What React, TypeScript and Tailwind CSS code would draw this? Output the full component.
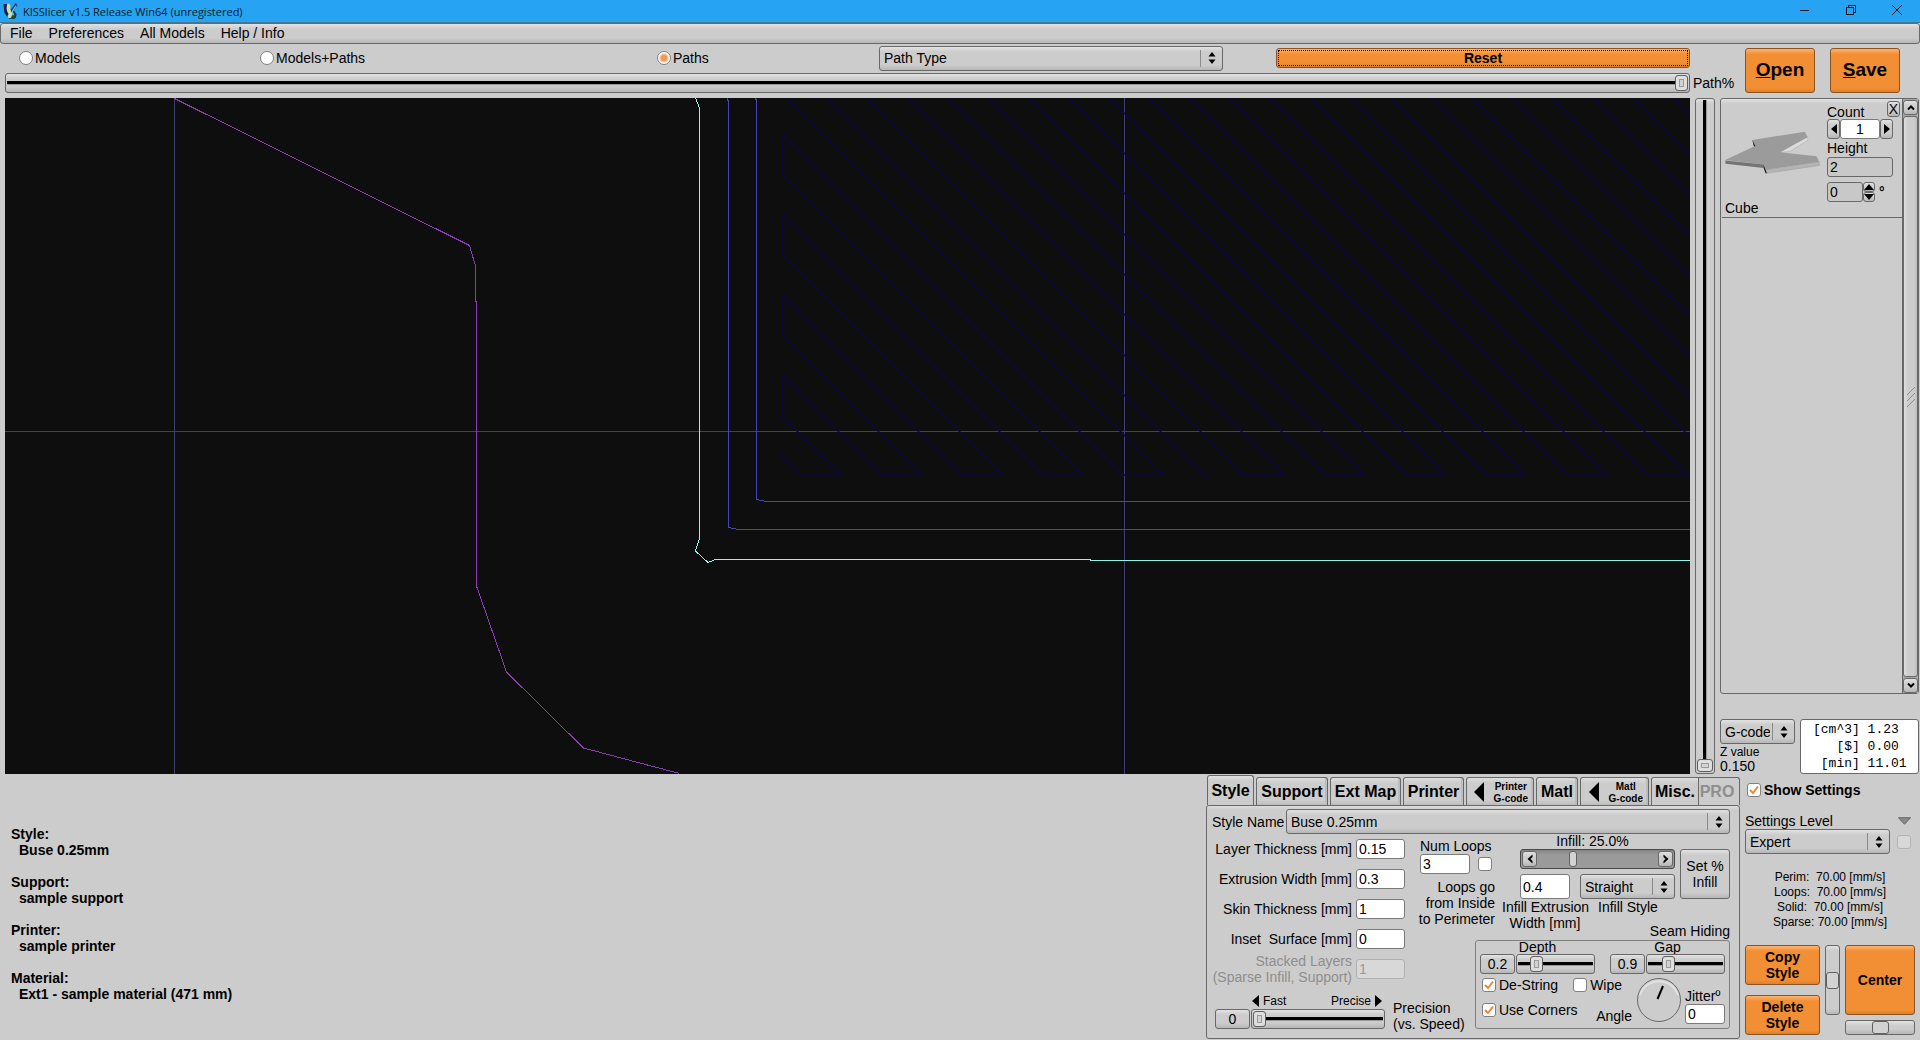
import type { ReactNode } from 'react';

const box =
  'rounded-[3px] border border-[#686868] bg-[linear-gradient(to_bottom,#e2e2e2_0,#cccccc_5px,#cccccc_calc(100%_-_5px),#b6b6b6_100%)]';

const orange =
  'rounded-[3px] border border-[#8a5420] bg-[linear-gradient(to_bottom,#fcb574_0,#f28f35_5px,#f28f35_calc(100%_-_4px),#dd7f2c_100%)] font-bold text-black';

const thumb =
  '[&::-webkit-slider-thumb]:appearance-none [&::-webkit-slider-thumb]:rounded-[3px] [&::-webkit-slider-thumb]:border [&::-webkit-slider-thumb]:border-[#606060] [&::-webkit-slider-thumb]:bg-[#d2d2d2]';

const slot =
  '[&::-webkit-slider-thumb]:shadow-[inset_0_0_0_3px_#dedede,inset_0_0_0_4px_#9a9a9a]';

const hTrack =
  '[&::-webkit-slider-runnable-track]:h-full [&::-webkit-slider-runnable-track]:bg-[linear-gradient(to_bottom,transparent_calc(50%_-_2px),#000_calc(50%_-_2px),#000_calc(50%_+_1px),#999_calc(50%_+_1px),#999_calc(50%_+_2px),transparent_calc(50%_+_2px))]';

const field = 'h-5 rounded-[3px] border border-[#7a7a7a] bg-white px-[2px] text-sm outline-none';

type SliderProps = { label: string; value: number; className?: string };

const Slider = ({ label, value, className = '' }: SliderProps) => (
  <input
    type="range"
    aria-label={label}
    defaultValue={value}
    className={`block h-5 min-w-0 appearance-none p-px ${box} ${hTrack} ${thumb} ${slot} [&::-webkit-slider-thumb]:h-4 [&::-webkit-slider-thumb]:w-[13px] ${className}`}
  />
);

const UpDown = () => (
  <svg viewBox="0 0 8 12" className="h-3 w-2" fill="#000">
    <path d="M4 0 L7.5 4.5 H0.5 Z M4 12 L7.5 7.5 H0.5 Z" />
  </svg>
);

type SelectProps = { label: string; id?: string; options: string[]; className?: string };

const Select = ({ label, id, options, className = '' }: SelectProps) => (
  <div className={`relative min-w-0 ${className}`}>
    <select id={id} aria-label={label} className={`block h-[25px] w-full appearance-none pr-6 pl-[4px] text-sm outline-none ${box}`}>
      {options.map((o) => (
        <option key={o}>{o}</option>
      ))}
    </select>
    <span className="pointer-events-none absolute inset-y-1 right-[1px] flex w-[22px] items-center justify-center border-l border-[#8a8a8a]">
      <UpDown />
    </span>
  </div>
);

type CheckProps = { children?: ReactNode; label?: string; checked?: boolean; disabled?: boolean };

const Check = ({ children, label, checked, disabled }: CheckProps) => (
  <label className="flex items-center gap-[3px]">
    <span className="relative block size-[14px]">
      <input
        type="checkbox"
        aria-label={label}
        defaultChecked={checked}
        disabled={disabled}
        className="peer block size-[14px] appearance-none rounded-[3px] border border-[#808080] bg-white disabled:border-[#b4b4b4] disabled:bg-[#d8d8d8]"
      />
      <svg viewBox="0 0 14 14" className="pointer-events-none absolute inset-0 hidden size-[14px] peer-checked:block" fill="none" stroke="#e8883a" strokeWidth="2">
        <path d="M3 7 L6 10 L11 3.5" />
      </svg>
    </span>
    {children}
  </label>
);

const Radio = ({ children, checked }: { children: string; checked?: boolean }) => (
  <label className="flex items-center gap-[2px]">
    <input
      type="radio"
      name="view"
      defaultChecked={checked}
      className="size-[14px] appearance-none rounded-full border border-[#808080] bg-white checked:bg-[radial-gradient(circle,#f09a55_0,#f09a55_3px,#fff_5px)]"
    />
    {children}
  </label>
);

const Arrow = ({ d, className = 'h-2.5 w-[6px]' }: { d: 'left' | 'right'; className?: string }) => (
  <svg viewBox="0 0 6 10" preserveAspectRatio="none" className={className} fill="#000">
    <path d={d === 'left' ? 'M6 0 V10 L0 5 Z' : 'M0 0 V10 L6 5 Z'} />
  </svg>
);

const Chevron = ({ d }: { d: 'left' | 'right' }) => (
  <svg viewBox="0 0 6 10" className="h-2.5 w-1.5" fill="#000">
    <path d={d === 'left' ? 'M5.5 0.5 V3 L3.5 5 L5.5 7 V9.5 L0.5 5 Z' : 'M0.5 0.5 V3 L2.5 5 L0.5 7 V9.5 L5.5 5 Z'} />
  </svg>
);

const TitleBar = () => (
  <header className="flex h-[23px] items-center border-b border-[#4a7796] bg-[#26a3f2] pl-[3px]">
    <svg viewBox="0 0 16 18" className="mr-1 h-[17px] w-4">
      <path d="M0 1 H5 L6 8 L4 15 L1 10 Z" fill="#16204e" />
      <path d="M8 7 L13 0 L15 2 L11 8 L14 12 L13 16 L6 17 Z" fill="#12355a" />
      <path d="M4 1 C7 0 8 3 7 7 C10 11 11 15 7 16 C4 16 4 13 6 12 C3 9 3 5 4 1 Z" fill="#cfe0a4" />
      <path d="M9 8 L14 1 L13 5 L10 9 L12 14 L9 16 Z" fill="#79b6c8" />
      <path d="M9 13 L13 13 L12 17 L8 17 Z" fill="#1c4a2e" />
    </svg>
    <span className="pt-px font-['Open_Sans',sans-serif] text-[11px] text-[#0a1a28]">KISSlicer v1.5 Release Win64 (unregistered)</span>
    <div className="ml-auto flex pb-0.5">
      <button aria-label="Minimize" className="flex h-5 w-[46px] items-center justify-center">
        <svg viewBox="0 0 10 10" className="size-2.5" stroke="#0a1a28" shapeRendering="crispEdges">
          <path d="M0 5.5 H9" />
        </svg>
      </button>
      <button aria-label="Restore" className="flex h-5 w-[46px] items-center justify-center">
        <svg viewBox="0 0 10 10" className="size-2.5" fill="none" stroke="#0a1a28" shapeRendering="crispEdges">
          <path d="M0.5 2.5 H7.5 V9.5 H0.5 Z M2.5 2.5 V0.5 H9.5 V7.5 H7.5" />
        </svg>
      </button>
      <button aria-label="Close" className="flex h-5 w-[46px] items-center justify-center">
        <svg viewBox="0 0 10 10" className="size-2.5" stroke="#0a1a28">
          <path d="M0 0 L10 10 M10 0 L0 10" />
        </svg>
      </button>
    </div>
  </header>
);

const MenuBar = () => (
  <nav className={`flex h-[21px] items-center pb-0.5 pl-px text-sm ${box}`}>
    {['File', 'Preferences', 'All Models', 'Help / Info'].map((m) => (
      <button key={m} className="px-2 leading-4">
        {m}
      </button>
    ))}
  </nav>
);

const Toolbar = () => (
  <div className="flex h-[54px] pl-[5px]">
    <div className="flex flex-1 flex-col">
      <div className="grid h-7 grid-cols-[241fr_397fr_222fr_344fr_53fr_414fr] items-center pl-[14px]">
        <Radio>Models</Radio>
        <Radio>Models+Paths</Radio>
        <Radio checked>Paths</Radio>
        <Select label="Path type" options={['Path Type']} />
        <span />
        <button className={`h-5 p-px text-sm ${orange}`}>
          <span className="block h-4 border border-dotted border-black leading-[14px]">Reset</span>
        </button>
      </div>
      <Slider label="Path%" value={100} className="mt-px w-full" />
    </div>
    <span className="w-[55px] self-end pb-[7px] pl-[3px] leading-4">Path%</span>
    <div className="flex gap-[15px] pt-1 pr-5">
      <button className={`h-[45px] w-[70px] pb-0.5 text-[19px] ${orange}`}>
        <u>O</u>pen
      </button>
      <button className={`h-[45px] w-[70px] pb-0.5 text-[19px] ${orange}`}>
        <u>S</u>ave
      </button>
    </div>
  </div>
);

// Infill raster: 45 degree lines joined at alternating ends
const LEFT = 778;
const BOTTOM = 377;
const bottomX = (k: number) => Math.round(796 + 40.3 * k);
const leftY = (k: number) => BOTTOM - (bottomX(k) - LEFT);

const infill = Array.from({ length: 32 }, (_, k) => {
  const x = bottomX(k);
  if (k === 0) return `M${LEFT - 5} ${leftY(0) - 5} L${x} ${BOTTOM} H${bottomX(1)}`;
  if (k === 10) return `M${x - BOTTOM} 0 L${x + 3} ${BOTTOM + 3}`;
  const joined = k < 10 ? k % 2 === 0 : k % 2 === 1;
  const start = leftY(k) > 0 ? `M${LEFT} ${leftY(k)}` : `M${x - BOTTOM} 0`;
  const side = k % 2 === 1 && leftY(k + 1) > 0 ? `M${LEFT} ${leftY(k)} V${leftY(k + 1)}` : '';
  return `${start} L${x} ${BOTTOM} ${joined ? `H${bottomX(k + 1)}` : ''} ${side}`;
}).join(' ');

const Viewport = () => (
  <div className="relative min-w-0 flex-1 overflow-hidden bg-[#0e0e0e]">
    <svg className="absolute inset-0 size-full" fill="none">
      <g stroke="#3f3c76" shapeRendering="crispEdges">
        <path d="M169.5 0 V676 M1119.5 0 V676 M0 333.5 H1685" />
      </g>
      <path d={infill} stroke="#0b0842" strokeWidth="1.5" />
      <g shapeRendering="crispEdges">
        <path d="M169.5 0.5 L464.5 147.5 L470.5 168 V203 H471.5 V488 L501.5 574 L578.5 650 L674.5 675.5" stroke="#8a3cb4" />
        <path d="M722.5 0 V2 H723.5 V429.5 L734 431.5 H1685 M750.5 0 V1 H751.5 V401.5 L761 403.5 H1685" stroke="#4744c0" />
        <path d="M690.5 0 L694.5 10 V440 L690.5 453 L703 464.5 L710.5 461.5 H1085 V462.5 H1685" stroke="#8ff5e6" />
      </g>
    </svg>
  </div>
);

const ModelCard = () => (
  <div className="flex h-[119px] flex-1 border-b border-[#686868] pl-[3px]">
    <div className="flex w-[102px] flex-col justify-between pt-8">
      <svg viewBox="135 122 286 130" className="h-[43px] w-[95px]">
        <path d="M300 187 L384 139 L385 150 L330 184 Z" fill="#dcdcdc" stroke="#8c8c8c" />
        <path d="M135 210 L222 169 L217 149 L376 124 L384 141 L300 186 L411 198 L419 215 L258 239 L251 223 Z" fill="#9b9b9b" />
        <path d="M135 211 L251 223 L251 234 L136 221 Z" fill="#747474" />
        <path d="M258 239 L419 215 L420 226 L261 250 Z" fill="#b4b4b4" stroke="#8c8c8c" />
        <path d="M217 149 L222 169 L226 167 Z M251 223 L261 250 L257 250 L251 234 Z" fill="#1c1c1c" />
      </svg>
      <span className="leading-[18px]">Cube</span>
    </div>
    <div className="flex flex-1 flex-col pt-0.5">
      <div className="flex h-[18px] justify-between pr-0.5">
        <label htmlFor="count" className="leading-[22px]">
          Count
        </label>
        <button aria-label="Remove" className={`h-4 w-[13px] text-sm leading-[14px] ${box}`}>
          X
        </button>
      </div>
      <div className="flex">
        <button aria-label="Fewer" className={`flex h-5 w-[13px] items-center justify-center ${box}`}>
          <Arrow d="left" />
        </button>
        <input id="count" defaultValue="1" className={`w-10 text-center ${field}`} />
        <button aria-label="More" className={`flex h-5 w-[13px] items-center justify-center ${box}`}>
          <Arrow d="right" />
        </button>
      </div>
      <label htmlFor="height" className="pt-px leading-[17px]">
        Height
      </label>
      <input id="height" readOnly defaultValue="2" className="h-5 w-[66px] rounded-[3px] border border-[#686868] bg-[#c8c8c8] px-[2px] outline-none" />
      <div className="mt-[5px] flex">
        <input aria-label="Rotation" defaultValue="0" className="h-5 w-9 rounded-[3px] border border-[#686868] bg-[#c8c8c8] px-[2px] outline-none" />
        <div className="mr-1 flex flex-col">
          <button aria-label="Rotate up" className={`flex h-2.5 w-3 items-center justify-center ${box}`}>
            <svg viewBox="0 0 10 6" className="h-1.5 w-2.5 shrink-0">
              <path d="M0 6 H10 L5 0 Z" />
            </svg>
          </button>
          <button aria-label="Rotate down" className={`flex h-2.5 w-3 items-center justify-center ${box}`}>
            <svg viewBox="0 0 10 6" className="h-1.5 w-2.5 shrink-0">
              <path d="M0 0 H10 L5 6 Z" />
            </svg>
          </button>
        </div>
        <span className="font-bold leading-5">°</span>
      </div>
    </div>
  </div>
);

const ListScrollbar = () => (
  <div className="flex w-4 flex-col gap-px border-l border-[#686868] bg-[#a8a8a8] pt-px">
    <button aria-label="Scroll up" className={`flex h-[15px] items-center justify-center ${box}`}>
      <svg viewBox="0 0 8 5" className="h-[5px] w-2" fill="none" stroke="#000" strokeWidth="2">
        <path d="M1 4.5 L4 1.5 L7 4.5" />
      </svg>
    </button>
    <div className="flex flex-1 items-center justify-center rounded-[3px] border border-[#686868] bg-[linear-gradient(to_right,#dedede,#cccccc_4px,#cccccc_10px,#bdbdbd)]">
      <svg viewBox="0 0 10 20" className="h-5 w-2.5" stroke="#8e8e8e">
        <path d="M1 8 L9 0 M1 14 L9 6 M1 20 L9 12" />
      </svg>
    </div>
    <button aria-label="Scroll down" className={`flex h-[15px] items-center justify-center ${box}`}>
      <svg viewBox="0 0 8 5" className="h-[5px] w-2" fill="none" stroke="#000" strokeWidth="2">
        <path d="M1 0.5 L4 3.5 L7 0.5" />
      </svg>
    </button>
  </div>
);

const ModelColumn = () => (
  <aside className="flex w-[200px] flex-col pr-px">
    <div className="flex flex-1 rounded-[3px] border border-[#686868] bg-[linear-gradient(to_bottom,#e2e2e2_0,#cccccc_5px)] pl-px">
      <ModelCard />
      <ListScrollbar />
    </div>
    <div className="mt-[25px] flex gap-[5px]">
      <div className="w-[75px]">
        <Select label="Output" options={['G-code']} />
        <label htmlFor="z" className="block pt-px text-xs leading-[15px]">
          Z value
        </label>
        <output className="block leading-[13px]">0.150</output>
      </div>
      <pre className="h-[55px] flex-1 rounded-[3px] border border-[#686868] bg-white pt-px pl-[12px] font-['Liberation_Mono',monospace] text-[13px] leading-[17px]">
        {'[cm^3] 1.23\n   [$] 0.00\n [min] 11.01'}
      </pre>
    </div>
  </aside>
);

const info = [
  ['Style:', 'Buse 0.25mm'],
  ['Support:', 'sample support'],
  ['Printer:', 'sample printer'],
  ['Material:', 'Ext1 - sample material (471 mm)'],
];

const InfoText = () => (
  <dl className="flex flex-1 flex-col gap-4 pt-[52px] pl-[11px] font-bold leading-4">
    {info.map(([k, v]) => (
      <div key={k}>
        <dt>{k}</dt>
        <dd className="pl-2">{v}</dd>
      </div>
    ))}
  </dl>
);

const tab = 'mr-0.5 h-7 rounded-t-[3px] border border-b-0 border-[#686868] bg-[linear-gradient(to_bottom,#dedede_0,#cccccc_5px,#cccccc_calc(100%_-_4px),#bcbcbc_100%)] text-base font-bold shadow-[inset_-2px_0_0_#bcbcbc]';

const GcodeTab = ({ name, className }: { name: string; className: string }) => (
  <button className={`flex items-center justify-end gap-2.5 pr-[5px] ${tab} ${className}`}>
    <Arrow d="left" className="h-5 w-2.5" />
    <span className="pt-0.5 text-[10px] leading-3">
      {name}
      <br />
      G-code
    </span>
  </button>
);

const Tabs = () => (
  <div className="flex items-end pl-px">
    <button className="mr-0.5 h-[30px] w-[47px] rounded-t-[3px] border border-b-0 border-[#686868] bg-[linear-gradient(to_bottom,#e2e2e2_0,#cccccc_5px)] text-base font-bold">
      Style
    </button>
    <button className={`w-[72px] ${tab}`}>Support</button>
    <button className={`w-[71px] ${tab}`}>Ext Map</button>
    <button className={`w-[61px] ${tab}`}>Printer</button>
    <GcodeTab name="Printer" className="w-[68px]" />
    <button className={`w-[42px] ${tab}`}>Matl</button>
    <GcodeTab name="Matl" className="w-[69px]" />
    <button className="h-7 w-[48px] rounded-tl-[3px] border border-b-0 border-[#686868] bg-[linear-gradient(to_bottom,#dedede_0,#cccccc_5px)] text-base font-bold">
      Misc.
    </button>
    <button disabled className="h-7 flex-1 rounded-tr-[3px] border-t border-r border-[#686868] pr-1 text-base font-bold text-[#8e8e8e]">
      PRO
    </button>
  </div>
);

const thickness = [
  ['Layer Thickness [mm]', '0.15'],
  ['Extrusion Width [mm]', '0.3'],
  ['Skin Thickness [mm]', '1'],
  ['Inset  Surface [mm]', '0'],
];

const ValueSlider = ({ label, shown, value }: { label: string; shown: string; value: number }) => (
  <div className="w-[115px]">
    <div className="text-center leading-[13px]">{label}</div>
    <div className="flex gap-px">
      <output className={`h-5 w-[35px] text-center leading-[18px] ${box}`}>{shown}</output>
      <Slider label={label} value={value} className="flex-1" />
    </div>
  </div>
);

const SeamHiding = () => (
  <div role="group" aria-label="Seam Hiding" className="mt-px h-[89px] rounded-[3px] border border-[#808080] px-1">
    <div className="flex justify-between">
      <ValueSlider label="Depth" shown="0.2" value={20} />
      <ValueSlider label="Gap" shown="0.9" value={22} />
    </div>
    <div className="flex justify-between pl-0.5">
      <div className="w-[150px] pt-[3px] leading-4">
        <div className="flex gap-[15px]">
          <Check checked>De-String</Check>
          <Check>Wipe</Check>
        </div>
        <div className="mt-[9px] flex h-[22px] justify-between">
          <div className="self-start">
            <Check checked>Use Corners</Check>
          </div>
          <span className="self-end">Angle</span>
        </div>
      </div>
      <svg viewBox="0 0 46 46" className="mt-[3px] size-[46px]">
        <circle cx="23" cy="23" r="21.5" fill="#cccccc" stroke="#686868" />
        <path d="M4 18 A20 20 0 0 1 42 18" fill="none" stroke="#e2e2e2" strokeWidth="2" />
        <path d="M21.5 22 L27 9" stroke="#000" strokeWidth="2" />
      </svg>
      <div className="w-10 pt-3.5">
        <label htmlFor="jitter" className="block whitespace-nowrap leading-4">
          Jitterº
        </label>
        <input id="jitter" defaultValue="0" className={`block w-10 ${field}`} />
      </div>
    </div>
  </div>
);

const StylePanel = () => (
  <section className="w-[534px] pt-px">
    <Tabs />
    <div className="rounded-[3px] border border-[#686868] bg-[linear-gradient(to_bottom,#dedede_0,#cccccc_4px)] pt-[3px] pr-[9px] pb-[5px] pl-[5px]">
      <div className="flex items-center">
        <label htmlFor="style-name" className="w-[74px] whitespace-nowrap">
          Style Name
        </label>
        <Select id="style-name" label="Style Name" options={['Buse 0.25mm']} className="flex-1" />
      </div>
      <div className="grid grid-cols-[193px_70px_20px_minmax(0,1fr)] grid-rows-[105px_40px_54px]">
        <div className="row-span-2 flex flex-col gap-2.5 pt-[5px]">
          {thickness.map(([name, value]) => (
            <label key={name} className="flex h-5 items-center justify-end gap-1 whitespace-pre">
              {name}
              <input defaultValue={value} className={`w-[49px] ${field}`} />
            </label>
          ))}
          <label className="flex h-5 items-center justify-end gap-1 text-right leading-4 whitespace-nowrap text-[#8e8e8e]">
            <span>
              Stacked Layers
              <br />
              (Sparse Infill, Support)
            </span>
            <input disabled defaultValue="1" className="h-5 w-[49px] rounded-[3px] border border-[#b0b0b0] bg-[#d8d8d8] px-[2px] text-[#9a9a9a]" />
          </label>
        </div>
        <div className="col-span-2 pt-1 pl-[15px] leading-4">
          <label htmlFor="loops" className="block">
            Num Loops
          </label>
          <div className="flex items-center gap-2">
            <input id="loops" defaultValue="3" className={`w-[50px] ${field}`} />
            <Check label="Loops go from inside to perimeter" />
          </div>
          <div className="flex justify-end pt-[5px] text-right whitespace-nowrap">
            Loops go
            <br />
            from Inside
            <br />
            to Perimeter
          </div>
        </div>
        <div className="pl-[7px]">
          <div className="flex items-end gap-[5px] pl-[18px]">
            <div className="min-w-0 flex-1">
              <div className="pr-2.5 text-center leading-[15px]">Infill: 25.0%</div>
              <div className="flex h-5 items-center rounded-[3px] border border-[#484848] bg-[linear-gradient(to_bottom,#858585,#9a9a9a_5px)] px-px">
                <button aria-label="Less infill" className={`flex h-4 w-[15px] items-center justify-center ${box}`}>
                  <Chevron d="left" />
                </button>
                <input
                  type="range"
                  aria-label="Infill"
                  defaultValue={28}
                  className={`h-4 min-w-0 flex-1 appearance-none bg-transparent ${thumb} [&::-webkit-slider-thumb]:h-4 [&::-webkit-slider-thumb]:w-2`}
                />
                <button aria-label="More infill" className={`flex h-4 w-[15px] items-center justify-center ${box}`}>
                  <Chevron d="right" />
                </button>
              </div>
              <div className="flex gap-2.5 pt-[5px]">
                <input id="infill-width" defaultValue="0.4" className="h-[25px] w-[50px] rounded-[3px] border border-[#7a7a7a] bg-white px-[2px] outline-none" />
                <Select id="infill-style" label="Infill Style" options={['Straight']} className="flex-1" />
              </div>
            </div>
            <button className={`h-[50px] w-[50px] leading-4 ${box}`}>
              Set %
              <br />
              Infill
            </button>
          </div>
          <div className="flex h-10 leading-4 whitespace-nowrap">
            <label htmlFor="infill-width" className="w-[86px] text-center">
              Infill Extrusion
              <br />
              Width [mm]
            </label>
            <div className="flex flex-1 flex-col justify-between">
              <label htmlFor="infill-style" className="pl-2.5">
                Infill Style
              </label>
              <span className="text-right">Seam Hiding</span>
            </div>
          </div>
        </div>
        <div className="col-span-2 col-start-3 row-span-2 row-start-2">
          <SeamHiding />
        </div>
        <div className="col-span-2 flex gap-2 pl-[3px]">
          <div className="w-[170px] pt-3.5">
            <div className="flex h-4 items-center gap-1 pr-[3px] pl-[37px] text-xs">
              <Arrow d="left" className="h-3 w-[7px]" />
              <span>Fast</span>
              <span className="ml-auto">Precise</span>
              <Arrow d="right" className="h-3 w-[7px]" />
            </div>
            <div className="flex gap-px">
              <output className={`h-5 w-[35px] text-center leading-[18px] ${box}`}>0</output>
              <Slider label="Precision" value={0} className="flex-1" />
            </div>
          </div>
          <div className="pt-[21px] leading-4 whitespace-nowrap">
            Precision
            <br />
            (vs. Speed)
          </div>
        </div>
      </div>
    </div>
  </section>
);

const SettingsColumn = () => (
  <aside className="ml-[5px] w-[175px] pr-[5px]">
    <div className="flex h-[31px] items-center pl-0.5 font-bold">
      <Check checked>Show Settings</Check>
    </div>
    <div className="mt-2 flex items-center justify-between pr-1 leading-4">
      <label htmlFor="level">Settings Level</label>
      <svg viewBox="0 0 14 8" className="h-2 w-[13px]">
        <path d="M0.5 0.5 H13.5 L7 7.5 Z" fill="#8a8a8a" stroke="#606060" />
      </svg>
    </div>
    <div className="flex items-center gap-[7px]">
      <Select id="level" label="Settings Level" options={['Expert']} className="w-[145px]" />
      <Check label="Lock level" disabled />
    </div>
    <pre className="pt-4 text-center font-['Liberation_Sans',Arial,sans-serif] text-xs leading-[15px]">
      {'Perim:  70.00 [mm/s]\nLoops:  70.00 [mm/s]\nSolid:  70.00 [mm/s]\nSparse: 70.00 [mm/s]'}
    </pre>
    <div className="mt-[15px] flex gap-[5px]">
      <div className="flex w-[75px] flex-col gap-2.5">
        <button className={`h-10 text-sm leading-4 ${orange}`}>
          Copy
          <br />
          Style
        </button>
        <button className={`h-10 text-sm leading-4 ${orange}`}>
          Delete
          <br />
          Style
        </button>
      </div>
      <input
        type="range"
        aria-label="Tilt"
        defaultValue={50}
        className={`block h-[70px] w-[15px] appearance-none [writing-mode:vertical-lr] ${box} ${thumb} [&::-webkit-slider-thumb]:h-[17px] [&::-webkit-slider-thumb]:w-[13px]`}
      />
      <div className="flex flex-1 flex-col gap-[5px]">
        <button className={`h-[70px] ${orange}`}>Center</button>
        <input
          type="range"
          aria-label="Turn"
          defaultValue={50}
          className={`block h-[15px] w-full appearance-none ${box} ${thumb} [&::-webkit-slider-thumb]:h-[13px] [&::-webkit-slider-thumb]:w-[17px]`}
        />
      </div>
    </div>
  </aside>
);

export default function App() {
  return (
    <div className="flex min-h-screen flex-col bg-[#cccccc] font-['Liberation_Sans',Arial,sans-serif] text-sm text-black">
      <TitleBar />
      <MenuBar />
      <Toolbar />
      <main className="flex flex-1 gap-[5px] pl-[5px]">
        <Viewport />
        <input
          id="z"
          type="range"
          defaultValue={100}
          className={`block w-5 appearance-none p-px [writing-mode:vertical-lr] rounded-[3px] border border-[#686868] bg-[linear-gradient(to_bottom,#e2e2e2_0,#cccccc_5px)] [&::-webkit-slider-runnable-track]:w-full [&::-webkit-slider-runnable-track]:bg-[linear-gradient(to_right,transparent_calc(50%_-_2px),#000_calc(50%_-_2px),#000_calc(50%_+_1px),#999_calc(50%_+_1px),#999_calc(50%_+_2px),transparent_calc(50%_+_2px))] ${thumb} ${slot} [&::-webkit-slider-thumb]:h-[13px] [&::-webkit-slider-thumb]:w-4`}
        />
        <ModelColumn />
      </main>
      <footer className="flex pb-px">
        <InfoText />
        <StylePanel />
        <SettingsColumn />
      </footer>
    </div>
  );
}
